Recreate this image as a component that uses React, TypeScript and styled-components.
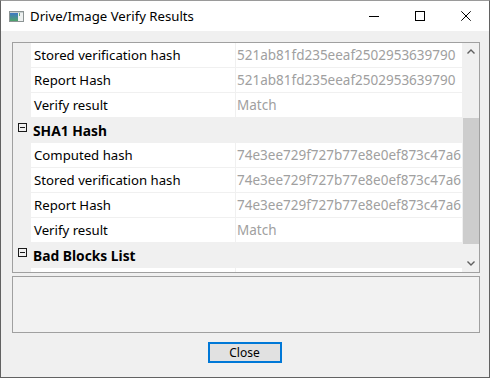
import styled, { createGlobalStyle } from "styled-components";

const GlobalStyle = createGlobalStyle`
  html, body {
    margin: 0;
    padding: 0;
    width: 490px;
    height: 378px;
    overflow: hidden;
    background: #ffffff;
  }
  body {
    font-family: "Segoe UI", "Noto Sans", sans-serif;
    font-size: 13px;
    color: #000;
  }
`;

type Item =
  | { kind: "category"; label: string }
  | { kind: "prop"; label: string; value: string };

const items: Item[] = [
  { kind: "prop", label: "Stored verification hash", value: "521ab81fd235eeaf2502953639790" },
  { kind: "prop", label: "Report Hash", value: "521ab81fd235eeaf2502953639790" },
  { kind: "prop", label: "Verify result", value: "Match" },
  { kind: "category", label: "SHA1 Hash" },
  { kind: "prop", label: "Computed hash", value: "74e3ee729f727b77e8e0ef873c47a6" },
  { kind: "prop", label: "Stored verification hash", value: "74e3ee729f727b77e8e0ef873c47a6" },
  { kind: "prop", label: "Report Hash", value: "74e3ee729f727b77e8e0ef873c47a6" },
  { kind: "prop", label: "Verify result", value: "Match" },
  { kind: "category", label: "Bad Blocks List" },
  { kind: "prop", label: "", value: "" },
];

function AppIcon() {
  return (
    <svg width="15" height="11" viewBox="0 0 15 11">
      <defs>
        <linearGradient id="pane" x1="0" y1="0" x2="0" y2="1">
          <stop offset="0" stopColor="#3d78c4" />
          <stop offset="1" stopColor="#4fa36a" />
        </linearGradient>
      </defs>
      <rect x="0.5" y="0.5" width="14" height="10" fill="#eef1f1" stroke="#8c9494" />
      <rect x="1" y="2" width="8" height="8" fill="url(#pane)" />
      <rect x="10" y="2" width="1" height="3" fill="#6fae7c" />
      <rect x="1" y="1" width="13" height="1" fill="#c8d0d0" />
    </svg>
  );
}

function App() {
  return (
    <>
      <GlobalStyle />
      <Window>
        <TitleBar>
          <AppIcon />
          <Title>Drive/Image Verify Results</Title>
          <Controls>
            <ControlButton>
              <svg width="10" height="10" viewBox="0 0 10 10">
                <rect x="0" y="5" width="10" height="1" fill="#000" />
              </svg>
            </ControlButton>
            <ControlButton>
              <svg width="10" height="10" viewBox="0 0 10 10">
                <rect x="0.5" y="0.5" width="9" height="9" fill="none" stroke="#000" />
              </svg>
            </ControlButton>
            <ControlButton>
              <svg width="10" height="10" viewBox="0 0 10 10">
                <path d="M0.3 0.3 L9.7 9.7 M9.7 0.3 L0.3 9.7" stroke="#000" strokeWidth="1" />
              </svg>
            </ControlButton>
          </Controls>
        </TitleBar>
        <Client>
          <PropertyGrid>
            <Rows>
              {items.map((item, i) =>
                item.kind === "category" ? (
                  <CategoryRow key={i}>
                    <Toggle>
                      <ToggleBox />
                    </Toggle>
                    <CategoryLabel>{item.label}</CategoryLabel>
                  </CategoryRow>
                ) : (
                  <PropRow key={i}>
                    <Gutter />
                    <Label>{item.label}</Label>
                    <Value>{item.value}</Value>
                  </PropRow>
                )
              )}
            </Rows>
            <ScrollBar>
              <Arrow>
                <svg width="8" height="5" viewBox="0 0 8 5">
                  <path d="M0.5 4.5 L4 1 L7.5 4.5" fill="none" stroke="#606060" strokeWidth="1.4" />
                </svg>
              </Arrow>
              <Track>
                <Thumb $offset={58} $size={126} />
              </Track>
              <Arrow>
                <svg width="8" height="5" viewBox="0 0 8 5">
                  <path d="M0.5 0.5 L4 4 L7.5 0.5" fill="none" stroke="#606060" strokeWidth="1.4" />
                </svg>
              </Arrow>
            </ScrollBar>
          </PropertyGrid>
          <DescriptionPanel />
          <ButtonRow>
            <DialogButton>Close</DialogButton>
          </ButtonRow>
        </Client>
      </Window>
    </>
  );
}

const Window = styled.div`
  width: 490px;
  height: 378px;
  box-sizing: border-box;
  border: 1px solid #626262;
  border-top-color: #9a9a9a;
  background: #f0f0f0;
  display: flex;
  flex-direction: column;
`;

const TitleBar = styled.div`
  height: 30px;
  background: #ffffff;
  display: flex;
  align-items: center;
  padding-left: 8px;
  flex-shrink: 0;

  svg {
    display: block;
  }
`;

const Title = styled.span`
  margin-left: 6px;
  font-size: 13.2px;
  color: #000;
`;

const Controls = styled.div`
  margin-left: auto;
  display: flex;
  height: 100%;
`;

const ControlButton = styled.div`
  width: 46px;
  height: 30px;
  display: flex;
  align-items: center;
  justify-content: center;
`;

const Client = styled.div`
  flex: 1;
  display: flex;
  flex-direction: column;
  padding: 11px 9px 0 11px;
`;

const PropertyGrid = styled.div`
  width: 468px;
  height: 231px;
  box-sizing: border-box;
  border: 1px solid #a0a0a0;
  background: #f0f0f0;
  display: flex;
`;

const Rows = styled.div`
  flex: 1;
  overflow: hidden;
`;

const RowBase = styled.div`
  height: 25px;
  box-sizing: border-box;
  border-bottom: 1px solid #f0f0f0;
  display: flex;
  align-items: stretch;
`;

const PropRow = styled(RowBase)``;

const CategoryRow = styled(RowBase)`
  background: #f0f0f0;
  align-items: center;
`;

const Gutter = styled.div`
  width: 18px;
  background: #f0f0f0;
`;

const Cell = styled.div`
  background: #ffffff;
  display: flex;
  align-items: center;
  white-space: nowrap;
  overflow: hidden;
`;

const Label = styled(Cell)`
  width: 205px;
  padding-left: 3px;
  box-sizing: border-box;
  border-right: 1px solid #f0f0f0;
  font-size: 13.2px;
  color: #000;
`;

const Value = styled(Cell)`
  flex: 1;
  padding-left: 1px;
  font-size: 13.5px;
  color: #a0a0a0;
`;

const Toggle = styled.div`
  width: 18px;
  display: flex;
  justify-content: center;
  align-items: center;
`;

const ToggleBox = styled.div`
  width: 9px;
  height: 9px;
  box-sizing: border-box;
  border: 1px solid #1a1a1a;
  position: relative;
  margin-left: 1px;
  margin-top: -5px;

  &::after {
    content: "";
    position: absolute;
    left: 1px;
    right: 1px;
    top: 3px;
    height: 1px;
    background: #1a1a1a;
  }
`;

const CategoryLabel = styled.span`
  padding-left: 2px;
  font-weight: bold;
  font-size: 13.8px;
`;

const ScrollBar = styled.div`
  width: 17px;
  display: flex;
  flex-direction: column;
  background: #f0f0f0;
`;

const Arrow = styled.div`
  height: 17px;
  display: flex;
  align-items: center;
  justify-content: center;

  svg {
    display: block;
  }
`;

const Track = styled.div`
  flex: 1;
  display: flex;
  flex-direction: column;
`;

const Thumb = styled.div<{ $offset: number; $size: number }>`
  margin-top: ${(p) => p.$offset}px;
  height: ${(p) => p.$size}px;
  margin-left: 1px;
  background: #cdcdcd;
`;

const DescriptionPanel = styled.div`
  width: 468px;
  height: 57px;
  box-sizing: border-box;
  margin-top: 3px;
  border: 1px solid #a0a0a0;
  background: #f2f2f2;
`;

const ButtonRow = styled.div`
  display: flex;
  justify-content: center;
  margin-top: 9px;
  padding-right: 3px;
`;

const DialogButton = styled.button`
  width: 74px;
  height: 21px;
  box-sizing: border-box;
  border: 2px solid #0078d7;
  background: #e1e1e1;
  font-family: "Segoe UI", "Noto Sans", sans-serif;
  font-size: 12px;
  color: #000;
  padding: 0;
  line-height: 15px;
`;

export default App;
